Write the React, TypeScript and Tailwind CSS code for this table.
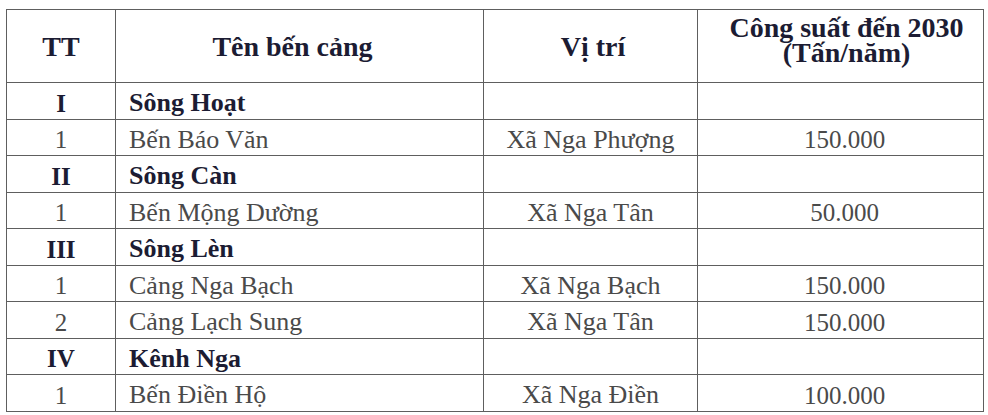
const rows: { tt: string; name: string; loc?: string; cap?: string; group?: boolean }[] = [
  { tt: "I", name: "Sông Hoạt", group: true },
  { tt: "1", name: "Bến Báo Văn", loc: "Xã Nga Phượng", cap: "150.000" },
  { tt: "II", name: "Sông Càn", group: true },
  { tt: "1", name: "Bến Mộng Dường", loc: "Xã Nga Tân", cap: "50.000" },
  { tt: "III", name: "Sông Lèn", group: true },
  { tt: "1", name: "Cảng Nga Bạch", loc: "Xã Nga Bạch", cap: "150.000" },
  { tt: "2", name: "Cảng Lạch Sung", loc: "Xã Nga Tân", cap: "150.000" },
  { tt: "IV", name: "Kênh Nga", group: true },
  { tt: "1", name: "Bến Điền Hộ", loc: "Xã Nga Điền", cap: "100.000" },
];

export default function App() {
  return (
    <div className="w-[988px] h-[415px] bg-white pt-[9px] pl-[6px]">
      <table className="border-collapse table-fixed w-[977px] font-[Liberation_Serif]">
        <colgroup>
          <col className="w-[109px]" />
          <col className="w-[368px]" />
          <col className="w-[214px]" />
          <col className="w-[286px]" />
        </colgroup>
        <thead>
          <tr className="h-[73px] text-[#1c1c33] font-bold text-[28px] leading-none">
            <th className="border border-[#5e5e5e] text-center pt-[2px]">TT</th>
            <th className="border border-[#5e5e5e] text-center pt-[2px] pr-[14px]">Tên bến cảng</th>
            <th className="border border-[#5e5e5e] text-center pt-[2px] pl-[5px]">Vị trí</th>
            <th className="border border-[#5e5e5e] text-center pl-[12px] pb-[12px] leading-[25px]">
              Công suất đến 2030
              <br />
              (Tấn/năm)
            </th>
          </tr>
        </thead>
        <tbody>
          {rows.map((r, i) => (
            <tr key={i} className={r.group ? "h-[36.5px] leading-none font-bold text-[#1c1c33]" : "h-[36.5px] leading-none text-[#4a4a4a]"}>
              <td className="border border-[#5e5e5e] text-center text-[25px] pt-[5px]">{r.tt}</td>
              <td className="border border-[#5e5e5e] pl-[13px] text-[26px] pt-[5px]">{r.name}</td>
              <td className="border border-[#5e5e5e] text-center text-[26px] pt-[5px]">{r.loc}</td>
              <td className="border border-[#5e5e5e] text-center text-[25px] pt-[5px] pl-[8px]">{r.cap}</td>
            </tr>
          ))}
        </tbody>
      </table>
    </div>
  );
}
